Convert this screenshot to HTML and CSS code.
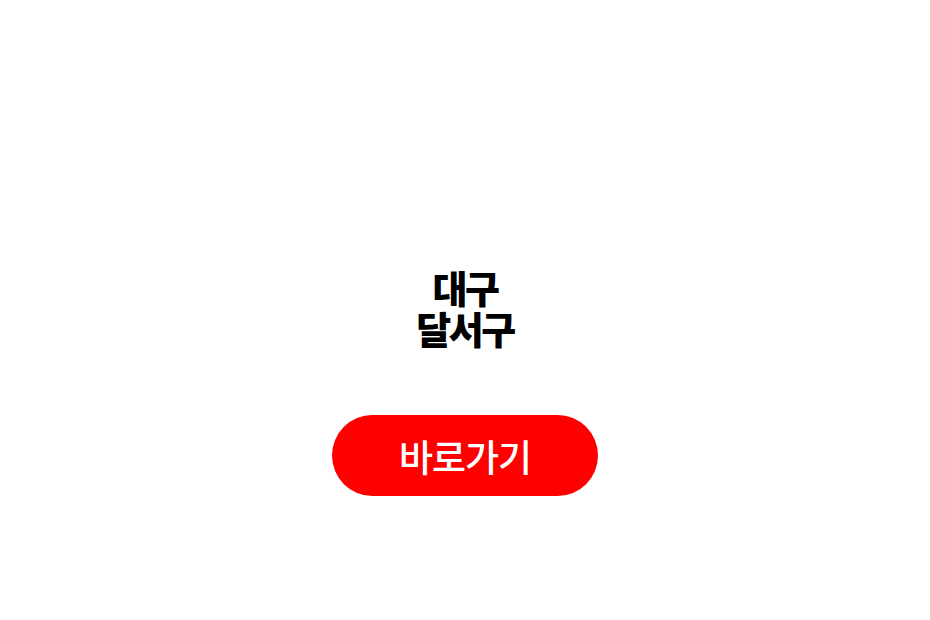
FILE: index.html
```html
<!DOCTYPE html>
<html lang="ko">
<head>
  <meta charset="UTF-8" />
  <meta name="viewport" content="width=device-width, initial-scale=1.0"/>
  <title>대구 달서구</title>
  <link rel="stylesheet" href="styles.css">
</head>
<body>
  <div class="page">
    <h1 class="title">대구<br>달서구</h1>
    <a class="go-btn" href="#">바로가기</a>
  </div>
</body>
</html>
```
FILE: styles.css
```css
body {
  margin: 0;
  background: #fff;
  font-family: "Noto Sans CJK KR", "Noto Sans", sans-serif;
}

.page {
  display: flex;
  flex-direction: column;
  align-items: center;
  padding-top: 266px;
}

.title {
  margin: 0;
  font-size: 38px;
  line-height: 41px;
  font-weight: 900;
  letter-spacing: -2.5px;
  color: #000;
  text-align: center;
}

.go-btn {
  margin-top: 67px;
  width: 266px;
  height: 81px;
  display: flex;
  align-items: center;
  justify-content: center;
  background: #ff0000;
  border-radius: 41px;
  color: #fff;
  font-size: 37px;
  font-weight: 500;
  letter-spacing: -1px;
  text-decoration: none;
}
```
